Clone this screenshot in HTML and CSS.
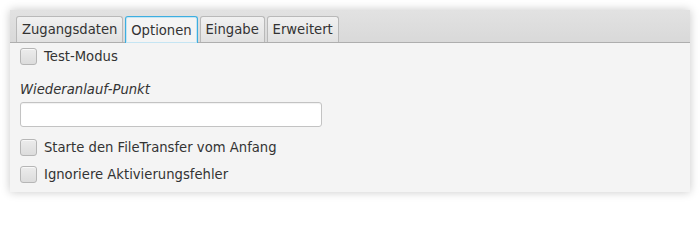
FILE: index.html
```html
<!DOCTYPE html>
<html lang="de">
<head>
<meta charset="utf-8">
<title>Optionen</title>
<link rel="stylesheet" href="styles.css">
</head>
<body>
<div class="window">
  <div class="tabbar">
    <div class="tab">Zugangsdaten</div>
    <div class="tab selected">Optionen</div>
    <div class="tab">Eingabe</div>
    <div class="tab">Erweitert</div>
  </div>
  <div class="content">
    <label class="check row-first"><span class="box"></span><span>Test-Modus</span></label>
    <div class="field-label">Wiederanlauf-Punkt</div>
    <div class="textfield"></div>
    <label class="check row-second"><span class="box"></span><span>Starte den FileTransfer vom Anfang</span></label>
    <label class="check row-third"><span class="box"></span><span>Ignoriere Aktivierungsfehler</span></label>
  </div>
</div>
</body>
</html>
```
FILE: styles.css
```css
html, body {
  margin: 0;
  padding: 0;
  background: #ffffff;
}
body {
  font-family: "DejaVu Sans", "Liberation Sans", sans-serif;
  font-size: 13.2px;
  color: #333333;
  width: 700px;
  height: 202px;
  overflow: hidden;
}
.window {
  margin: 10px;
  width: 680px;
  height: 182px;
  background: #f4f4f4;
  box-shadow: 0 0 9px rgba(0, 0, 0, 0.22);
  display: flex;
  flex-direction: column;
}
.tabbar {
  height: 33px;
  box-sizing: border-box;
  padding: 6px 0 0 6px;
  background: linear-gradient(#e2e2e2, #d9d9d9);
  border-bottom: 1px solid #aeaeae;
  display: flex;
  gap: 2px;
  align-items: flex-end;
}
.tab {
  height: 26px;
  box-sizing: border-box;
  padding: 1px 4.9px 0 4.9px;
  border: 1px solid #b9b9b9;
  border-bottom: none;
  border-radius: 3px 3px 0 0;
  background: linear-gradient(#f1f1f1, #e1e1e1);
  display: flex;
  align-items: center;
  line-height: 1;
}
.tab.selected {
  border: 1px solid #3daee0;
  border-bottom: none;
  background: #f4f4f4;
  box-shadow: inset 0 0 0 1px rgba(110, 200, 240, 0.35);
  height: 27px;
  margin-bottom: -1px;
}
.content {
  padding: 5px 0 0 10px;
  display: flex;
  flex-direction: column;
  align-items: flex-start;
}
.check {
  display: flex;
  align-items: center;
  gap: 7px;
  height: 17px;
}
.box {
  width: 17px;
  height: 17px;
  box-sizing: border-box;
  border: 1px solid #b6b6b6;
  border-radius: 3px;
  background: linear-gradient(#ececec, #dcdcdc);
  box-shadow: inset 0 1px 0 #f8f8f8;
}
.field-label {
  margin-top: 16px;
  height: 17px;
  line-height: 17px;
  font-style: italic;
}
.textfield {
  margin-top: 4px;
  width: 302px;
  height: 25px;
  box-sizing: border-box;
  border: 1px solid #c3c3c3;
  border-radius: 3px;
  background: #ffffff;
  box-shadow: inset 0 1px 1px rgba(0, 0, 0, 0.06);
}
.row-second {
  margin-top: 12px;
}
.row-third {
  margin-top: 10px;
}
```
